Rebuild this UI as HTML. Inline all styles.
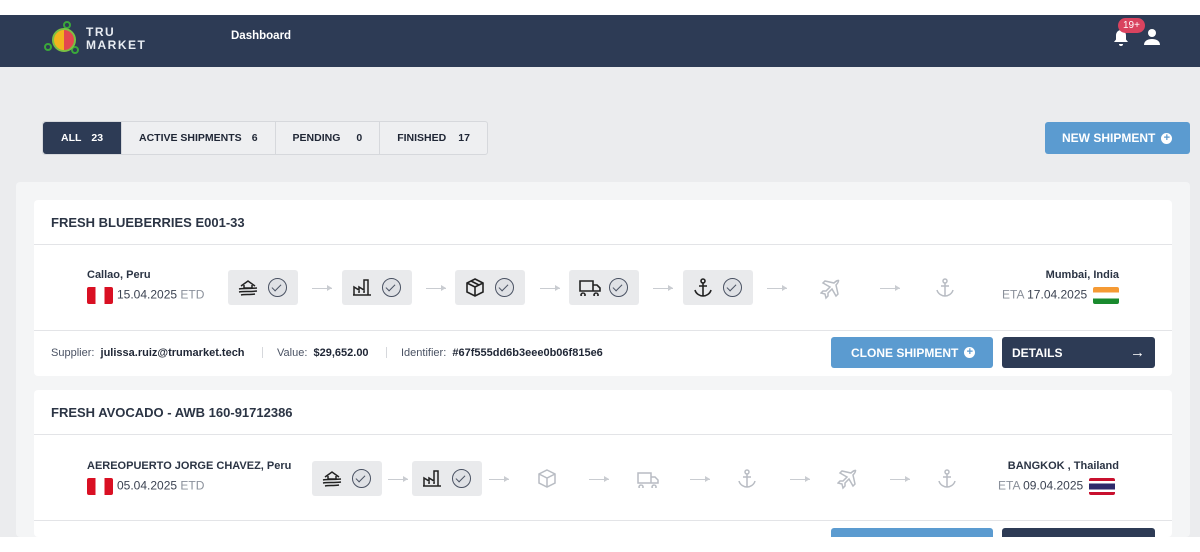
<!DOCTYPE html>
<html><head><meta charset="utf-8"><style>
*{box-sizing:border-box;margin:0;padding:0}
html,body{width:1200px;height:552px;overflow:hidden}
body{background:#fff;font-family:"Liberation Sans",sans-serif;position:relative;color:#2b3444}
.nav{position:absolute;top:15px;left:0;width:1200px;height:52px;background:#2d3b55}
.main{position:absolute;top:67px;left:0;width:1200px;height:470px;background:#ebecee}
.abs{position:absolute}
.tabs{position:absolute;left:42px;top:121px;height:34px;display:flex;border:1px solid #d6d8dc;border-radius:3px;background:#eeeff1;font-size:10.5px;font-weight:bold}
.tabs div{display:flex;align-items:center;padding:0 17px;border-right:1px solid #d6d8dc;color:#1f2635}
.tabs div span{margin-left:10px}
.btn{position:absolute;border-radius:3px;color:#fff;font-size:12px;font-weight:bold;display:flex;align-items:center}
.blue{background:#5b9bd0}
.dark{background:#2d3b55}
.plus{display:inline-block;width:11px;height:11px;border-radius:50%;background:#fff;color:#5b9bd0;font-size:11px;line-height:11px;text-align:center;margin-left:6px;font-weight:bold}
.panel{position:absolute;left:16px;top:182px;width:1174px;height:355px;background:#f4f5f6;border-radius:4px}
.card{position:absolute;left:34px;width:1138px;background:#fff;border-radius:4px}
.hd{height:45px;border-bottom:1px solid #e3e4e7;padding:15px 17px;font-size:13px;font-weight:bold;color:#2b3444}
.st{position:absolute;height:35px;width:70px;background:#e9eaec;border-radius:3px}
.st svg{position:absolute;top:8px}
.arr{position:absolute;width:20px;height:1px;background:#c9ccd1}
.arr:after{content:"";position:absolute;right:0;top:-3px;border-left:5px solid #c9ccd1;border-top:3.5px solid transparent;border-bottom:3.5px solid transparent}
.chk{position:absolute;left:40px;top:8px;width:19px;height:19px;border-radius:50%;border:1.5px solid #4a5263;background:#dfe1e5}
.chk:after{content:"";position:absolute;left:5px;top:3px;width:4px;height:8px;border:solid #4a5263;border-width:0 1.5px 1.5px 0;transform:rotate(45deg)}
.loc{position:absolute;font-size:11px;font-weight:bold}
.dt{position:absolute;font-size:12px;color:#3c4352}
.dt i{font-style:normal;color:#8a909a}
.pe{display:inline-block;width:26px;height:17px;vertical-align:middle;background:linear-gradient(90deg,#d91023 33%,#fff 33%,#fff 67%,#d91023 67%);border-radius:2px;margin-right:4px}
.in{display:inline-block;width:26px;height:17px;vertical-align:middle;background:linear-gradient(#f59a34 33%,#fff 33%,#fff 67%,#198a2e 67%);border-radius:2px;margin-left:6px}
.th{display:inline-block;width:26px;height:17px;vertical-align:middle;background:linear-gradient(#c8102e 17%,#fff 17%,#fff 33%,#2d2a6b 33%,#2d2a6b 67%,#fff 67%,#fff 83%,#c8102e 83%);border-radius:2px;margin-left:6px}
.ft{position:absolute;top:0;font-size:11px;color:#4a5263}
.ft b{color:#1f2635}
</style></head><body>
<div class="nav">
 <svg class="abs" style="left:44px;top:6px" width="36" height="34" viewBox="0 0 36 34"><circle cx="23" cy="4" r="3" fill="none" stroke="#3aa83a" stroke-width="2"/><circle cx="4" cy="26" r="3" fill="none" stroke="#3aa83a" stroke-width="2"/><circle cx="31" cy="29" r="3" fill="none" stroke="#3aa83a" stroke-width="2"/><circle cx="20" cy="19" r="11" fill="#f2b51c"/><path d="M20 8a11 11 0 0 1 0 22z" fill="#e3484f"/><circle cx="20" cy="19" r="11" fill="none" stroke="#7ac142" stroke-width="2"/></svg>
 <div class="abs" style="left:86px;top:11px;color:#e8ecf2;font-size:12px;font-weight:bold;letter-spacing:1.5px;line-height:13px">TRU<br>MARKET</div>
 <div class="abs" style="left:231px;top:15px;color:#fff;font-size:11.5px;font-weight:bold">Dashboard</div>
 <svg class="abs" style="left:1113px;top:14px" width="16" height="18" viewBox="0 0 16 18"><path d="M8 1c-3 0-5 2.5-5 5.5v4L1 13h14l-2-2.5v-4C13 3.5 11 1 8 1z M6 15h4a2 2 0 0 1-4 0z" fill="#fff"/></svg>
 <div class="abs" style="left:1118px;top:3px;background:#d9435f;color:#fff;font-size:10px;border-radius:8px;padding:2px 5px">19+</div>
 <svg class="abs" style="left:1143px;top:13px" width="18" height="18" viewBox="0 0 18 18"><circle cx="9" cy="5" r="4" fill="#fff"/><path d="M1 17c0-4 3.5-6 8-6s8 2 8 6z" fill="#fff"/></svg>
</div>
<div class="main"></div>
<div class="tabs">
 <div style="background:#2d3b55;color:#fff;border-radius:3px 0 0 3px;padding:0 18px;width:79px">ALL<span>23</span></div>
 <div>ACTIVE SHIPMENTS<span>6</span></div>
 <div>PENDING<span style="margin-left:16px">0</span></div>
 <div style="border-right:none">FINISHED<span style="margin-left:12px">17</span></div>
</div>
<div class="btn blue" style="left:1045px;top:122px;width:145px;height:32px;padding-left:17px">NEW SHIPMENT<span class="plus">+</span></div>
<div class="panel"></div>

<div class="card" style="top:200px;height:176px">
 <div class="hd">FRESH BLUEBERRIES E001-33</div>
</div>
<div class="abs" style="left:34px;top:330px;width:1138px;height:1px;background:#e3e4e7"></div>
<div class="loc" style="left:87px;top:269px">Callao, Peru</div>
<div class="dt" style="left:87px;top:287px"><span class="pe"></span>15.04.2025 <i>ETD</i></div>
<div class="loc" style="left:1040px;top:269px;width:79px;text-align:right">Mumbai, India</div>
<div class="dt" style="left:1002px;top:287px"><i>ETA</i> 17.04.2025<span class="in"></span></div>

<div class="st" style="left:228px;top:270px"><svg style="left:10px" width="20" height="18" viewBox="0 0 20 18" fill="none" stroke="#222" stroke-width="1.5"><path d="M3 8l7-5 7 5M6 7v3h8V7M1 11c4-1 8 0 18-1M1 14c5-1 10 0 18-1M3 17c4-1 8 0 14-1"/></svg><div class="chk"></div></div>
<div class="arr" style="left:312px;top:288px"></div>
<div class="st" style="left:342px;top:270px"><svg style="left:10px" width="20" height="18" viewBox="0 0 20 18" fill="none" stroke="#222" stroke-width="1.5"><path d="M1 17h18M2 17V9l5 3V9l5 3V2h4v15M6 14h2M11 14h2"/></svg><div class="chk"></div></div>
<div class="arr" style="left:426px;top:288px"></div>
<div class="st" style="left:455px;top:270px"><svg style="left:10px" width="20" height="19" viewBox="0 0 20 19" fill="none" stroke="#222" stroke-width="1.6"><path d="M10 1l8 4v9l-8 4-8-4V5zM2 5l8 4 8-4M10 9v9M6 3l8 4"/></svg><div class="chk"></div></div>
<div class="arr" style="left:540px;top:288px"></div>
<div class="st" style="left:569px;top:270px"><svg style="left:10px" width="22" height="18" viewBox="0 0 22 18" fill="none" stroke="#222" stroke-width="1.6"><path d="M1 3h13v10H1zM14 7h4l3 3v3h-7M4 15a2 2 0 1 0 0.1 0M17 15a2 2 0 1 0 0.1 0"/></svg><div class="chk"></div></div>
<div class="arr" style="left:653px;top:288px"></div>
<div class="st" style="left:683px;top:270px"><svg style="left:10px" width="20" height="19" viewBox="0 0 20 19" fill="none" stroke="#222" stroke-width="1.6"><circle cx="10" cy="3" r="2"/><path d="M10 5v13M6 8h8M2 12c1 4 5 6 8 6s7-2 8-6"/></svg><div class="chk"></div></div>
<div class="arr" style="left:767px;top:288px"></div>
<svg class="abs" style="left:820px;top:278px" width="22" height="22" viewBox="0 0 22 22" fill="none" stroke="#b8bcc3" stroke-width="1.5"><path d="M18 2c1 1 0 3-2 5l2 9-2 2-4-7-4 4v3l-2 2-1-4-4-1 2-2h3l4-4-7-4 2-2 9 2c2-2 4-3 5-2z"/></svg>
<div class="arr" style="left:880px;top:288px"></div>
<svg class="abs" style="left:935px;top:278px" width="20" height="20" viewBox="0 0 20 20" fill="none" stroke="#b8bcc3" stroke-width="1.5"><circle cx="10" cy="3" r="2"/><path d="M10 5v13M6 8h8M2 12c1 4 5 6 8 6s7-2 8-6"/></svg>

<div class="ft" style="left:51px;top:347px">Supplier:&nbsp; <b>julissa.ruiz@trumarket.tech</b></div>
<div class="abs" style="left:262px;top:347px;width:1px;height:11px;background:#d6d8dc"></div>
<div class="ft" style="left:277px;top:347px">Value:&nbsp; <b>$29,652.00</b></div>
<div class="abs" style="left:386px;top:347px;width:1px;height:11px;background:#d6d8dc"></div>
<div class="ft" style="left:401px;top:347px">Identifier:&nbsp; <b>#67f555dd6b3eee0b06f815e6</b></div>
<div class="btn blue" style="left:831px;top:337px;width:162px;height:31px;padding-left:20px">CLONE SHIPMENT<span class="plus">+</span></div>
<div class="btn dark" style="left:1002px;top:337px;width:153px;height:31px;padding-left:10px">DETAILS<span style="position:absolute;right:10px;font-size:15px">→</span></div>

<div class="card" style="top:390px;height:147px">
 <div class="hd">FRESH AVOCADO - AWB 160-91712386</div>
</div>
<div class="abs" style="left:34px;top:520px;width:1138px;height:1px;background:#e3e4e7"></div>
<div class="loc" style="left:87px;top:460px">AEREOPUERTO JORGE CHAVEZ, Peru</div>
<div class="dt" style="left:87px;top:478px"><span class="pe"></span>05.04.2025 <i>ETD</i></div>
<div class="loc" style="left:1000px;top:460px;width:119px;text-align:right">BANGKOK , Thailand</div>
<div class="dt" style="left:998px;top:478px"><i>ETA</i> 09.04.2025<span class="th"></span></div>
<div class="st" style="left:312px;top:461px"><svg style="left:10px" width="20" height="18" viewBox="0 0 20 18" fill="none" stroke="#222" stroke-width="1.5"><path d="M3 8l7-5 7 5M6 7v3h8V7M1 11c4-1 8 0 18-1M1 14c5-1 10 0 18-1M3 17c4-1 8 0 14-1"/></svg><div class="chk"></div></div>
<div class="arr" style="left:388px;top:479px"></div>
<div class="st" style="left:412px;top:461px"><svg style="left:10px" width="20" height="18" viewBox="0 0 20 18" fill="none" stroke="#222" stroke-width="1.5"><path d="M1 17h18M2 17V9l5 3V9l5 3V2h4v15M6 14h2M11 14h2"/></svg><div class="chk"></div></div>
<div class="arr" style="left:489px;top:479px"></div>
<svg class="abs" style="left:537px;top:469px" width="20" height="19" viewBox="0 0 20 19" fill="none" stroke="#b8bcc3" stroke-width="1.5"><path d="M10 1l8 4v9l-8 4-8-4V5zM2 5l8 4 8-4M10 9v9"/></svg>
<div class="arr" style="left:589px;top:479px"></div>
<svg class="abs" style="left:637px;top:470px" width="22" height="18" viewBox="0 0 22 18" fill="none" stroke="#b8bcc3" stroke-width="1.5"><path d="M1 3h13v10H1zM14 7h4l3 3v3h-7M4 15a2 2 0 1 0 0.1 0M17 15a2 2 0 1 0 0.1 0"/></svg>
<div class="arr" style="left:690px;top:479px"></div>
<svg class="abs" style="left:737px;top:469px" width="20" height="20" viewBox="0 0 20 20" fill="none" stroke="#b8bcc3" stroke-width="1.5"><circle cx="10" cy="3" r="2"/><path d="M10 5v13M6 8h8M2 12c1 4 5 6 8 6s7-2 8-6"/></svg>
<div class="arr" style="left:790px;top:479px"></div>
<svg class="abs" style="left:837px;top:468px" width="22" height="22" viewBox="0 0 22 22" fill="none" stroke="#b8bcc3" stroke-width="1.5"><path d="M18 2c1 1 0 3-2 5l2 9-2 2-4-7-4 4v3l-2 2-1-4-4-1 2-2h3l4-4-7-4 2-2 9 2c2-2 4-3 5-2z"/></svg>
<div class="arr" style="left:890px;top:479px"></div>
<svg class="abs" style="left:937px;top:469px" width="20" height="20" viewBox="0 0 20 20" fill="none" stroke="#b8bcc3" stroke-width="1.5"><circle cx="10" cy="3" r="2"/><path d="M10 5v13M6 8h8M2 12c1 4 5 6 8 6s7-2 8-6"/></svg>
<div class="abs blue" style="left:831px;top:528px;width:162px;height:9px;border-radius:3px 3px 0 0"></div>
<div class="abs dark" style="left:1002px;top:528px;width:153px;height:9px;border-radius:3px 3px 0 0"></div>
<div class="abs" style="left:0;top:537px;width:1200px;height:15px;background:#fff"></div>
</body></html>
